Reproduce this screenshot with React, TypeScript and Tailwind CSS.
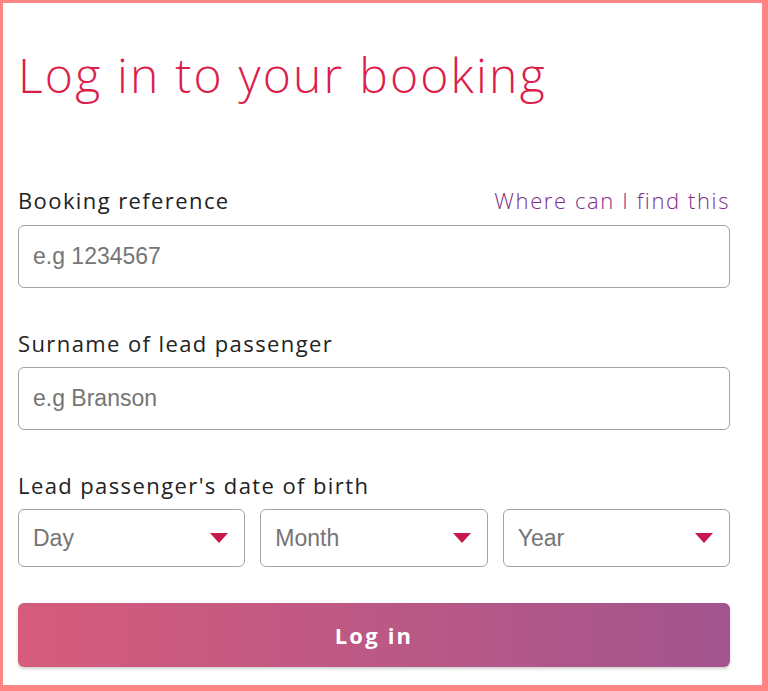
import React from "react";

const Caret = () => (
  <svg width="18" height="10" viewBox="0 0 18 10" className="shrink-0">
    <polygon points="0,0 18,0 9,10" fill="#c8174a" />
  </svg>
);

function Select({ label }: { label: string }) {
  return (
    <div className="flex-1 h-[58px] rounded-[6px] border border-[#a3a3a3] bg-white flex items-center justify-between pl-[14px] pr-[16px]">
      <span className="text-[23px] text-[#757575] font-['Liberation_Sans',Arial,sans-serif]">{label}</span>
      <Caret />
    </div>
  );
}

export default function App() {
  return (
    <div className="w-[768px] h-[691px] box-border border-[#ff8585] border-t-[3px] border-l-[3px] border-r-[6px] border-b-[6px] bg-white font-['Open_Sans',sans-serif]">
      <div className="pl-[15px] pr-[32px] pt-[44px]">
        <h1 className="text-[48px] leading-[56px] font-light text-[#dc1e4a] tracking-[2.2px] whitespace-nowrap">Log in to your booking</h1>

        <div className="mt-[85px] flex items-baseline justify-between leading-[24px]">
          <span className="text-[22px] text-[#222] tracking-[1.4px]">Booking reference</span>
          <span className="text-[22px] text-[#7e2f84] font-light tracking-[1.6px]">Where can I find this</span>
        </div>
        <div className="mt-[13px] h-[63px] rounded-[6px] border border-[#a3a3a3] flex items-center pl-[14px]">
          <span className="text-[23px] text-[#757575] font-['Liberation_Sans',Arial,sans-serif]">e.g 1234567</span>
        </div>

        <div className="mt-[43px] text-[22px] leading-[24px] text-[#222] tracking-[1.4px]">Surname of lead passenger</div>
        <div className="mt-[12px] h-[63px] rounded-[6px] border border-[#a3a3a3] flex items-center pl-[14px]">
          <span className="text-[23px] text-[#757575] font-['Liberation_Sans',Arial,sans-serif]">e.g Branson</span>
        </div>

        <div className="mt-[43px] text-[22px] leading-[24px] text-[#222] tracking-[1.4px]">Lead passenger's date of birth</div>
        <div className="mt-[12px] flex gap-[15px]">
          <Select label="Day" />
          <Select label="Month" />
          <Select label="Year" />
        </div>

        <button className="mt-[36px] w-full h-[64px] rounded-[6px] bg-gradient-to-r from-[#d65b7b] to-[#a2548d] text-white text-[22px] font-bold tracking-[2.2px] shadow-[0_2px_3px_rgba(0,0,0,0.18)] flex items-center justify-center">
          Log in
        </button>
      </div>
    </div>
  );
}
